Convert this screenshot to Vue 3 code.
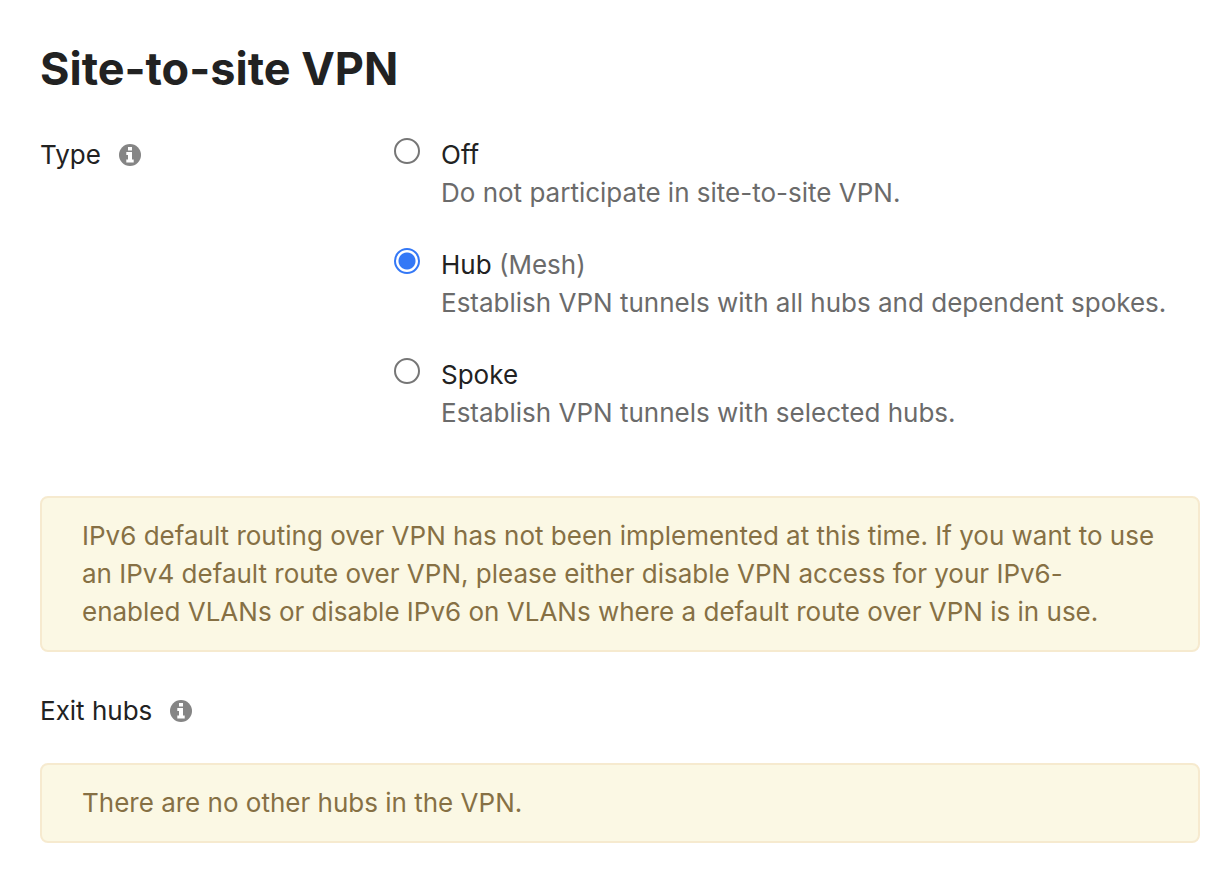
<script setup>
import { ref } from 'vue'

const type = ref('hub')
const options = [
  { id: 'off', name: 'Off', note: '', text: 'Do not participate in site-to-site VPN.' },
  { id: 'hub', name: 'Hub', note: '(Mesh)', text: 'Establish VPN tunnels with all hubs and dependent spokes.' },
  { id: 'spoke', name: 'Spoke', note: '', text: 'Establish VPN tunnels with selected hubs.' },
]
</script>

<template>
  <main class="page">
    <h1>Site-to-site VPN</h1>

    <section class="field" role="radiogroup" aria-labelledby="type-label">
      <div class="label">
        <span id="type-label">Type</span>
        <button class="info" type="button" aria-label="About type">
          <svg viewBox="0 0 22 22" aria-hidden="true">
            <circle cx="11" cy="11" r="11" />
            <path d="M9 3h4v3.500H9zM7.300 8H13v7.500h1.700V18.500H7.300v-3H9V11H7.300z" />
          </svg>
        </button>
      </div>
      <div class="options">
        <div v-for="o in options" :key="o.id" class="option">
          <input :id="o.id" v-model="type" type="radio" name="type" :value="o.id" :aria-describedby="o.id + '-text'" />
          <div>
            <label :for="o.id">{{ o.name }} <span v-if="o.note" class="muted">{{ o.note }}</span></label>
            <p :id="o.id + '-text'" class="muted">{{ o.text }}</p>
          </div>
        </div>
      </div>
    </section>

    <p class="notice">
      IPv6 default routing over VPN has not been implemented at this time. If you want to use an IPv4 default route over VPN, please either disable VPN access for your IPv6-enabled VLANs or disable IPv6 on VLANs where a default route over VPN is in use.
    </p>

    <section>
      <div class="label exit">
        <span>Exit hubs</span>
        <button class="info" type="button" aria-label="About exit hubs">
          <svg viewBox="0 0 22 22" aria-hidden="true">
            <circle cx="11" cy="11" r="11" />
            <path d="M9 3h4v3.500H9zM7.300 8H13v7.500h1.700V18.500H7.300v-3H9V11H7.300z" />
          </svg>
        </button>
      </div>
      <p class="notice">There are no other hubs in the VPN.</p>
    </section>
  </main>
</template>

<style>
body {
  margin: 0;
  background: #fff;
}
</style>

<style scoped>
.page {
  padding: 40px 32px 38px 40px;
  font-family: Inter, "Liberation Sans", sans-serif;
  font-size: 26px;
  line-height: 38px;
  color: #222;
}
h1 {
  margin: 0 0 38px;
  font-size: 45px;
  line-height: 58px;
  font-weight: 700;
}
p {
  margin: 0;
}
.field {
  display: grid;
  grid-template-columns: 354px 1fr;
  margin-bottom: 64px;
}
.label {
  display: flex;
  align-items: center;
  gap: 18px;
  height: 38px;
}
.info {
  width: 22px;
  height: 22px;
  padding: 0;
  border: 0;
  background: none;
}
.info svg {
  display: block;
  width: 22px;
  height: 22px;
}
.info circle {
  fill: #858585;
}
.info path {
  fill: #fff;
}
.options {
  display: grid;
  gap: 34px;
}
.option {
  display: flex;
  gap: 21px;
}
.option label {
  display: block;
}
.option input {
  appearance: none;
  flex: none;
  box-sizing: border-box;
  width: 26px;
  height: 26px;
  margin: 2px 0 0;
  border: 2px solid #767676;
  border-radius: 50%;
  background: #fff;
}
.option input:checked {
  border-color: #3478f6;
  background: radial-gradient(circle, #3478f6 0 8px, #fff 9px);
}
.muted {
  color: #6b6b6b;
}
.notice {
  padding: 19px 40px;
  border: 2px solid #f6eacf;
  border-radius: 8px;
  background: #fbf8e4;
  color: #867044;
}
.exit {
  margin: 40px 0 33px;
}
</style>
